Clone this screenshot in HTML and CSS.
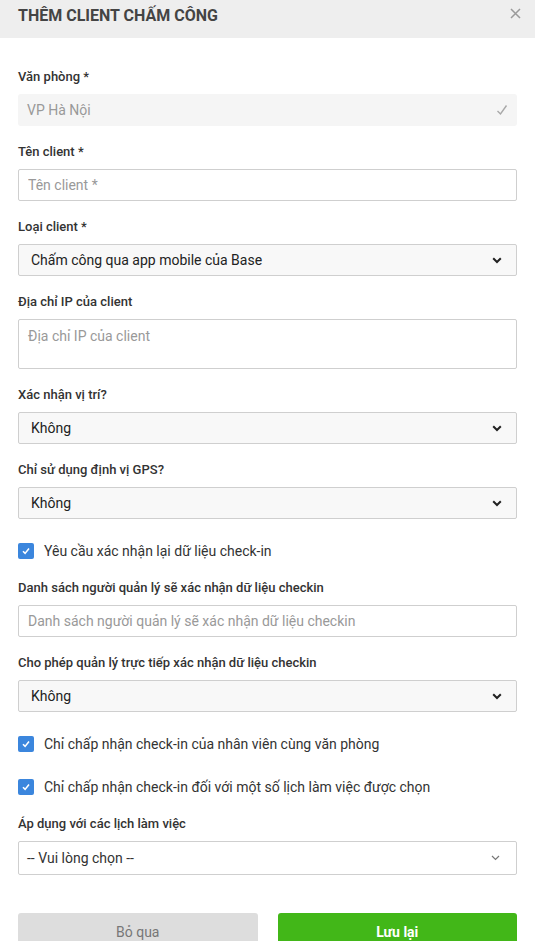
FILE: index.html
```html
<!DOCTYPE html>
<html lang="vi">
<head>
<meta charset="utf-8">
<link rel="stylesheet" href="styles.css">
</head>
<body>
<div class="modal">
  <div class="header">
    <div class="title">THÊM CLIENT CHẤM CÔNG</div>
    <div class="close">
      <svg width="11" height="11" viewBox="0 0 11 11"><path d="M1 1L10 10M10 1L1 10" stroke="#9a9a9a" stroke-width="1.5" fill="none"/></svg>
    </div>
  </div>
  <div class="body">
    <div class="group">
      <div class="label">Văn phòng *</div>
      <div class="readonly">
        <span>VP Hà Nội</span>
        <svg class="tick" width="12" height="12" viewBox="0 0 12 12"><path d="M1.5 7L4.5 10L10.5 1.5" stroke="#a8a8a8" stroke-width="1.4" fill="none"/></svg>
      </div>
    </div>
    <div class="group">
      <div class="label">Tên client *</div>
      <input class="input" type="text" placeholder="Tên client *">
    </div>
    <div class="group">
      <div class="label">Loại client *</div>
      <div class="selwrap">
        <select class="select"><option>Chấm công qua app mobile của Base</option></select>
        <svg class="chev" width="10" height="7" viewBox="0 0 10 7"><path d="M1.2 1.2L5 5L8.8 1.2" stroke="#222" stroke-width="2" fill="none"/></svg>
      </div>
    </div>
    <div class="group">
      <div class="label">Địa chỉ IP của client</div>
      <textarea class="textarea" placeholder="Địa chỉ IP của client"></textarea>
    </div>
    <div class="group">
      <div class="label">Xác nhận vị trí?</div>
      <div class="selwrap">
        <select class="select"><option>Không</option></select>
        <svg class="chev" width="10" height="7" viewBox="0 0 10 7"><path d="M1.2 1.2L5 5L8.8 1.2" stroke="#222" stroke-width="2" fill="none"/></svg>
      </div>
    </div>
    <div class="group">
      <div class="label">Chỉ sử dụng định vị GPS?</div>
      <div class="selwrap">
        <select class="select"><option>Không</option></select>
        <svg class="chev" width="10" height="7" viewBox="0 0 10 7"><path d="M1.2 1.2L5 5L8.8 1.2" stroke="#222" stroke-width="2" fill="none"/></svg>
      </div>
    </div>
    <div class="check">
      <span class="box"><svg width="10" height="10" viewBox="0 0 10 10"><path d="M2 5.3L4.1 7.4L8 2.6" stroke="#fff" stroke-width="1.6" fill="none"/></svg></span>
      <span class="ctext">Yêu cầu xác nhận lại dữ liệu check-in</span>
    </div>
    <div class="group">
      <div class="label">Danh sách người quản lý sẽ xác nhận dữ liệu checkin</div>
      <input class="input" type="text" placeholder="Danh sách người quản lý sẽ xác nhận dữ liệu checkin">
    </div>
    <div class="group">
      <div class="label">Cho phép quản lý trực tiếp xác nhận dữ liệu checkin</div>
      <div class="selwrap">
        <select class="select"><option>Không</option></select>
        <svg class="chev" width="10" height="7" viewBox="0 0 10 7"><path d="M1.2 1.2L5 5L8.8 1.2" stroke="#222" stroke-width="2" fill="none"/></svg>
      </div>
    </div>
    <div class="check">
      <span class="box"><svg width="10" height="10" viewBox="0 0 10 10"><path d="M2 5.3L4.1 7.4L8 2.6" stroke="#fff" stroke-width="1.6" fill="none"/></svg></span>
      <span class="ctext">Chỉ chấp nhận check-in của nhân viên cùng văn phòng</span>
    </div>
    <div class="check">
      <span class="box"><svg width="10" height="10" viewBox="0 0 10 10"><path d="M2 5.3L4.1 7.4L8 2.6" stroke="#fff" stroke-width="1.6" fill="none"/></svg></span>
      <span class="ctext">Chỉ chấp nhận check-in đối với một số lịch làm việc được chọn</span>
    </div>
    <div class="group last">
      <div class="label">Áp dụng với các lịch làm việc</div>
      <div class="chosen">
        <span>-- Vui lòng chọn --</span>
        <svg width="9" height="6" viewBox="0 0 9 6"><path d="M1 1L4.5 4.5L8 1" stroke="#777" stroke-width="1.2" fill="none"/></svg>
      </div>
    </div>
    <div class="buttons">
      <button class="btn cancel">Bỏ qua</button>
      <button class="btn save">Lưu lại</button>
    </div>
  </div>
</div>
</body>
</html>
```
FILE: styles.css
```css
* { box-sizing: border-box; }
html, body { margin: 0; padding: 0; background: #fff; }
body {
  font-family: Roboto, "Liberation Sans", Arial, sans-serif;
  color: #333;
  width: 535px;
  height: 941px;
  overflow: hidden;
}
.header {
  height: 38px;
  background: #eeeeee;
  display: flex;
  align-items: center;
  justify-content: space-between;
  padding: 0 14px 0 18px;
}
.title {
  font-size: 16px;
  font-weight: 700;
  color: #444;
  letter-spacing: 0;
  margin-top: -7px;
}
.close { display: flex; margin-top: -11px; }
.body { padding: 31px 18px 0 18px; }
.group { margin-bottom: 18px; }
.group.last { margin-bottom: 38px; }
.label {
  font-size: 13px;
  font-weight: 500;
  line-height: 16px;
  color: #333;
  margin-bottom: 9px;
}
.readonly {
  height: 32px;
  background: #f5f5f5;
  border-radius: 3px;
  display: flex;
  align-items: center;
  justify-content: space-between;
  padding: 0 9px 0 9px;
  font-size: 14px;
  color: #999;
}
.input, .textarea {
  display: block;
  width: 100%;
  height: 32px;
  border: 1px solid #cfcfcf;
  border-radius: 2px;
  padding: 0 9px;
  font-family: inherit;
  font-size: 14px;
  color: #333;
  background: #fff;
  outline: none;
}
.input::placeholder, .textarea::placeholder { color: #999; opacity: 1; }
.textarea {
  height: 50px;
  padding: 7px 9px;
  resize: none;
  line-height: 18px;
}
.selwrap { position: relative; }
.select {
  display: block;
  width: 100%;
  height: 32px;
  -webkit-appearance: none;
  appearance: none;
  border: 1px solid #cfcfcf;
  border-radius: 2px;
  background: #f8f8f8;
  padding: 0 12px;
  font-family: inherit;
  font-size: 14px;
  color: #222;
  outline: none;
}
.chev {
  position: absolute;
  right: 15px;
  top: 13px;
}
.check {
  height: 28px;
  display: flex;
  align-items: center;
  margin-bottom: 15px;
}
.box {
  width: 16px;
  height: 16px;
  border-radius: 2px;
  background: #3b86dd;
  display: flex;
  align-items: center;
  justify-content: center;
  margin-right: 10px;
}
.ctext { font-size: 14px; color: #333; }
.chosen {
  height: 34px;
  border: 1px solid #cfcfcf;
  border-radius: 2px;
  display: flex;
  align-items: center;
  justify-content: space-between;
  padding: 0 16px 0 8px;
  font-size: 14px;
  color: #333;
  background: #fff;
}
.buttons {
  display: flex;
  gap: 20px;
}
.btn {
  flex: 1;
  height: 38px;
  border: none;
  border-radius: 3px;
  font-family: inherit;
  font-size: 14px;
  padding: 0;
  line-height: 38px;
}
.cancel { background: #dddddd; color: #777; }
.save { background: #42b718; color: #fff; font-weight: 700; }
```
